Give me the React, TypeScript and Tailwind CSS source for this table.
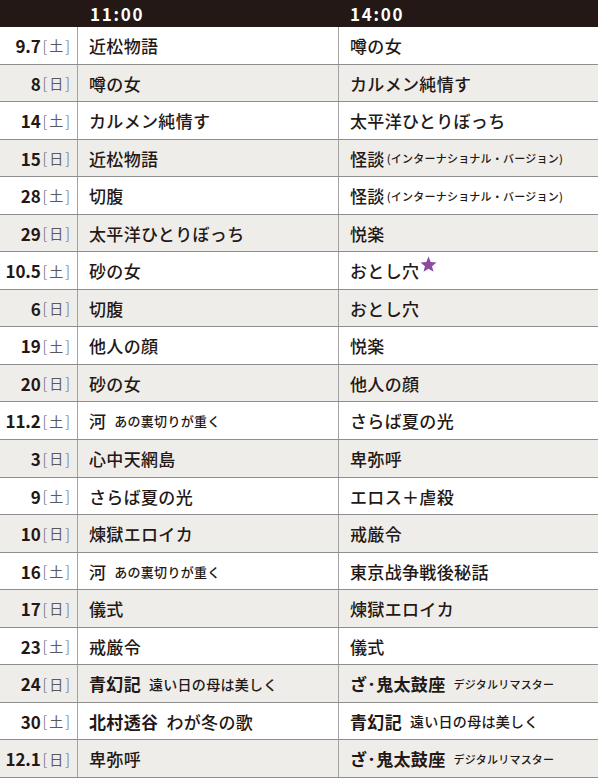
import React from 'react';

type Cell = { main: string; sub?: string; subSize?: string; bold?: boolean; star?: boolean; gap?: boolean };
type Row = { date: string; day: string; a: Cell; b: Cell };

const INTL = '(インターナショナル・バージョン)';
const ONI = 'ざ･鬼太鼓座';

const rows: Row[] = [
  { date: '9.7', day: '土', a: { main: '近松物語' }, b: { main: '噂の女' } },
  { date: '8', day: '日', a: { main: '噂の女' }, b: { main: 'カルメン純情す' } },
  { date: '14', day: '土', a: { main: 'カルメン純情す' }, b: { main: '太平洋ひとりぼっち' } },
  { date: '15', day: '日', a: { main: '近松物語' }, b: { main: '怪談', sub: INTL, subSize: 'text-[11px] ml-[2px]' } },
  { date: '28', day: '土', a: { main: '切腹' }, b: { main: '怪談', sub: INTL, subSize: 'text-[11px] ml-[2px]' } },
  { date: '29', day: '日', a: { main: '太平洋ひとりぼっち' }, b: { main: '悦楽' } },
  { date: '10.5', day: '土', a: { main: '砂の女' }, b: { main: 'おとし穴', star: true } },
  { date: '6', day: '日', a: { main: '切腹' }, b: { main: 'おとし穴' } },
  { date: '19', day: '土', a: { main: '他人の顔' }, b: { main: '悦楽' } },
  { date: '20', day: '日', a: { main: '砂の女' }, b: { main: '他人の顔' } },
  { date: '11.2', day: '土', a: { main: '河', sub: 'あの裏切りが重く', subSize: 'text-[13px]', gap: true }, b: { main: 'さらば夏の光' } },
  { date: '3', day: '日', a: { main: '心中天網島' }, b: { main: '卑弥呼' } },
  { date: '9', day: '土', a: { main: 'さらば夏の光' }, b: { main: 'エロス＋虐殺' } },
  { date: '10', day: '日', a: { main: '煉獄エロイカ' }, b: { main: '戒厳令' } },
  { date: '16', day: '土', a: { main: '河', sub: 'あの裏切りが重く', subSize: 'text-[13px]', gap: true }, b: { main: '東京战争戦後秘話' } },
  { date: '17', day: '日', a: { main: '儀式' }, b: { main: '煉獄エロイカ' } },
  { date: '23', day: '土', a: { main: '戒厳令' }, b: { main: '儀式' } },
  {
    date: '24',
    day: '日',
    a: { main: '青幻記', sub: '遠い日の母は美しく', subSize: 'text-[14px]', bold: true, gap: true },
    b: { main: ONI, sub: 'デジタルリマスター', subSize: 'text-[11px]', bold: true, gap: true },
  },
  {
    date: '30',
    day: '土',
    a: { main: '北村透谷', sub: 'わが冬の歌', subSize: 'text-[17px]', bold: true, gap: true },
    b: { main: '青幻記', sub: '遠い日の母は美しく', subSize: 'text-[14px]', bold: true, gap: true },
  },
  {
    date: '12.1',
    day: '日',
    a: { main: '卑弥呼' },
    b: { main: ONI, sub: 'デジタルリマスター', subSize: 'text-[11px]', bold: true, gap: true },
  },
];

const Star = () => (
  <svg viewBox="0 0 24 24" className="w-[17px] h-[17px] -mt-[13px] ml-[1px] shrink-0" fill="#8e4a9f">
    <path d="M12 0.8l3.1 7.6 8.2.6-6.3 5.3 2 8.1L12 17.9l-7 4.5 2-8.1L0.7 9l8.2-.6z" />
  </svg>
);

const Title = ({ cell }: { cell: Cell }) => (
  <div className="flex items-center pl-[11px] pt-[1px] whitespace-nowrap">
    <span className={`text-[17px] tracking-[0.02em] ${cell.bold ? 'font-bold' : 'font-medium'}`}>{cell.main}</span>
    {cell.sub && (
      <span className={`${cell.subSize} ${cell.gap ? 'ml-[8px]' : ''} font-medium tracking-[0.02em]`}>{cell.sub}</span>
    )}
    {cell.star && <Star />}
  </div>
);

export default function App() {
  return (
    <div
      className="w-[598px] bg-white text-[#231815]"
      style={{ fontFamily: '"Noto Sans CJK JP", "Noto Sans", sans-serif' }}
    >
      <div className="grid grid-cols-[78px_261px_259px] h-[27px] bg-[#231815] text-white">
        <div />
        <div className="flex items-center pl-[12px] text-[17px] font-bold tracking-[0.1em]">11:00</div>
        <div className="flex items-center pl-[11px] text-[17px] font-bold tracking-[0.1em]">14:00</div>
      </div>
      {rows.map((r, i) => (
        <div
          key={i}
          className={`grid grid-cols-[78px_261px_259px] h-[37.55px] border-b border-[#8e8e8e] ${
            i % 2 === 1 ? 'bg-[#efede9]' : 'bg-white'
          }`}
        >
          <div className="flex items-center justify-end pr-[7px] pt-[1px] border-r border-[#a3a3a3]">
            <span className="text-[17px] font-bold tracking-[-0.01em]">{r.date}</span>
            <span className="text-[14px] text-[#5a5a5a] ml-[2px] flex items-center">
              <span className="font-light text-[15px]">[</span>
              <span className="mx-[2px]">{r.day}</span>
              <span className="font-light text-[15px]">]</span>
            </span>
          </div>
          <div className="flex border-r border-[#a3a3a3]">
            <Title cell={r.a} />
          </div>
          <div className="flex">
            <Title cell={r.b} />
          </div>
        </div>
      ))}
    </div>
  );
}
